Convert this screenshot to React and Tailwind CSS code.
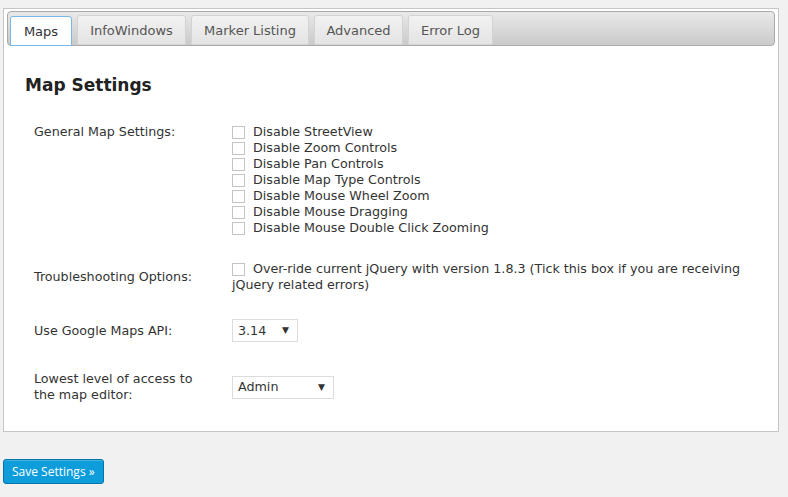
import React from "react";

const tabs = [
  { label: "Maps", w: "w-[62px]" },
  { label: "InfoWindows", w: "w-[109px]" },
  { label: "Marker Listing", w: "w-[118px]" },
  { label: "Advanced", w: "w-[89px]" },
  { label: "Error Log", w: "w-[85px]" },
];

const mapOptions = [
  "Disable StreetView",
  "Disable Zoom Controls",
  "Disable Pan Controls",
  "Disable Map Type Controls",
  "Disable Mouse Wheel Zoom",
  "Disable Mouse Dragging",
  "Disable Mouse Double Click Zooming",
];

function Box() {
  return <span className="inline-block w-[13px] h-[13px] border border-[#c4c4c4] bg-white shrink-0" />;
}

function Select({ value, width }) {
  return (
    <div
      className={`flex items-center justify-between border border-[#dcdcdc] bg-white h-[23px] pl-[5px] pr-[8px] text-[#333] ${width}`}
    >
      <span>{value}</span>
      <span className="text-[9px] leading-none">▼</span>
    </div>
  );
}

export default function App() {
  return (
    <div
      className="min-h-screen bg-[#f1f1f1] pt-[8px] px-[3px] text-[12.7px] text-[#333]"
      style={{ fontFamily: '"DejaVu Sans", Verdana, sans-serif' }}
    >
      <div className="w-[776px] border border-[#c6c6c6] bg-white pt-[2px] px-[3px] h-[424px]">
        <div className="flex items-end gap-[5px] h-[35px] rounded-[4px] border border-[#aaaaaa] bg-gradient-to-b from-[#e9e9e9] to-[#cacaca] pl-[2px]">
          {tabs.map((t, i) => (
            <div
              key={t.label}
              className={
                i === 0
                  ? `${t.w} h-[30px] flex items-center justify-center pt-[2px] bg-white border border-[#79b7e7] rounded-t-[3px] text-[13px] text-[#333] mb-[-1px]`
                  : `${t.w} h-[30px] flex items-center justify-center pt-[2px] bg-gradient-to-b from-[#f2f2f2] to-[#e4e4e4] border border-[#d3d3d3] rounded-t-[3px] text-[13px] text-[#555]`
              }
            >
              {t.label}
            </div>
          ))}
        </div>

        <div className="pl-[18px] pr-[20px]">
          <h2 className="text-[17px] font-bold text-[#222] mt-[28px] leading-[22px]">Map Settings</h2>

          <div className="pl-[9px] mt-[28px]">
            <div className="flex">
              <div className="w-[198px] leading-[16px]">General Map Settings:</div>
              <div className="flex flex-col">
                {mapOptions.map((o) => (
                  <label key={o} className="flex items-center gap-[8px] h-[16px]">
                    <Box />
                    <span>{o}</span>
                  </label>
                ))}
              </div>
            </div>

            <div className="flex items-center mt-[25px]">
              <div className="w-[198px]">Troubleshooting Options:</div>
              <div className="w-[520px] leading-[16px]">
                <span className="inline-block align-middle mr-[8px] h-[13px] leading-none">
                  <Box />
                </span>
                Over-ride current jQuery with version 1.8.3 (Tick this box if you are receiving jQuery related errors)
              </div>
            </div>

            <div className="flex items-center mt-[26px]">
              <div className="w-[198px]">Use Google Maps API:</div>
              <Select value="3.14" width="w-[66px]" />
            </div>

            <div className="flex items-center mt-[29px]">
              <div className="w-[198px] leading-[16px]">
                Lowest level of access to
                <br />
                the map editor:
              </div>
              <Select value="Admin" width="w-[102px]" />
            </div>
          </div>
        </div>
      </div>

      <button
        className="mt-[27px] h-[25px] px-[8px] rounded-[3px] bg-[#0d9ddb] border border-[#0075a8] text-white text-[12px] shadow-[inset_0_1px_0_rgba(120,200,230,0.5)]"
        style={{ fontFamily: '"Open Sans", sans-serif' }}
      >
        Save Settings »
      </button>
    </div>
  );
}
